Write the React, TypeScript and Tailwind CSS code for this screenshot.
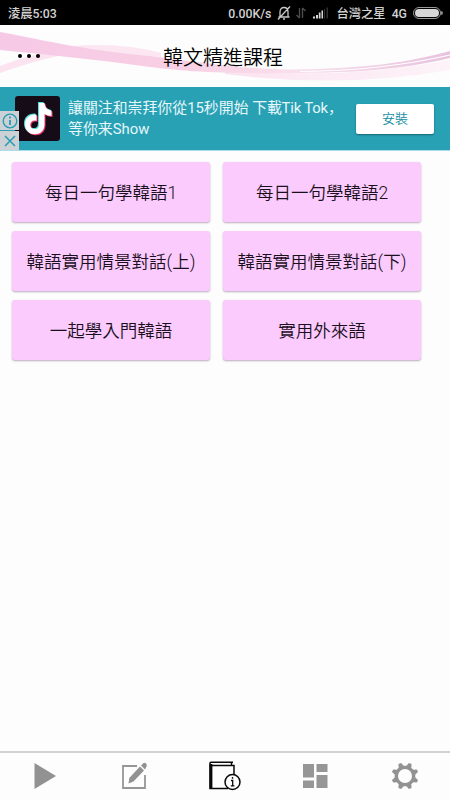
import type { ReactNode } from "react";

const courses = [
  "每日一句學韓語1",
  "每日一句學韓語2",
  "韓語實用情景對話(上)",
  "韓語實用情景對話(下)",
  "一起學入門韓語",
  "實用外來語",
];

const StatusBar = () => (
  <div className="flex h-[25px] shrink-0 items-center bg-black pl-2 pr-[7px] pt-px text-[12.300px] font-medium leading-[25px] text-[#d2d2d2]">
    <span className="whitespace-nowrap pt-[2px]">淩晨5:03</span>
    <span className="ml-auto whitespace-nowrap pt-[2px]">0.00K/s</span>
    <svg className="ml-[6px]" width="14" height="16" viewBox="0 0 14 16" fill="none" stroke="#c8c8c8" strokeWidth="1.300">
      <path d="M1.500 12h11M3 11.500V7c0-3 1.500-4.500 4-4.500S11 4 11 7v4.500M6 14h2M13 1.500 1 14.500" />
    </svg>
    <svg className="ml-[4px]" width="12" height="16" viewBox="0 0 12 16" fill="none" stroke="#4c4c4c" strokeWidth="1.400">
      <path d="M4.500 3v10M4.500 13l-3-3M7.500 13V3M7.500 3l3 3" />
    </svg>
    <svg className="ml-[6px]" width="16" height="14" viewBox="0 0 16 14">
      <path d="M0 12.500h2v-2H0zM3 12.500h2V9H3zM5.800 12.500h1.700V6.500H5.800zM8.500 12.500H10V4.500H8.500z" fill="#d8d8d8" />
      <path d="M11 12.500h1V3h-1zM13.500 12.500h1.500V1.500h-1.500z" fill="#303030" />
    </svg>
    <span className="ml-[7px] whitespace-nowrap pt-[2px]">台灣之星</span>
    <span className="ml-[6px] whitespace-nowrap pt-[2px]">4G</span>
    <span className="ml-[6px] flex h-[12px] w-[28px] items-center rounded-full border border-[#999] px-px">
      <span className="h-[8px] w-full rounded-full bg-[#d8d8d8]" />
    </span>
    <span className="h-1 w-[2px] rounded-r bg-[#888]" />
  </div>
);

const Header = () => (
  <header className="relative flex h-[62px] shrink-0 items-center justify-center overflow-hidden bg-[#fdfdfd]">
    <svg className="absolute inset-0" width="450" height="62" viewBox="0 0 450 62">
      <defs>
        <linearGradient id="ribbon" x1="0" x2="1">
          <stop offset="0" stopColor="#f6c9e6" />
          <stop offset="0.4" stopColor="#f8cfe4" />
          <stop offset="0.65" stopColor="#f9dfeb" />
          <stop offset="1" stopColor="#e8c3df" />
        </linearGradient>
        <linearGradient id="haze" x1="0" x2="1">
          <stop offset="0" stopColor="#fbe3f0" />
          <stop offset="1" stopColor="#fdf3f8" />
        </linearGradient>
      </defs>
      <path d="M0 41Q18 34 38 29L62 30Q30 37 0 48z" fill="#fbe3f0" />
      <path d="M72 21Q122 17 161 28V32Q125 29 95 27z" fill="#fce6f1" />
      <path d="M225 44Q340 56 450 35V45Q340 64 225 49z" fill="url(#haze)" />
      <path
        d="M0 7C35 13 80 25 150 31C200 37 230 43 290 44.500C350 44 400 40 450 26V33C400 45 350 48 290 48C220 49 180 46 150 42C100 35 50 30 0 25z"
        fill="url(#ribbon)"
      />
      <path d="M300 46.500Q380 46 450 30" fill="none" stroke="#fff" strokeWidth="1.200" />
    </svg>
    <button className="absolute left-[18px] top-[29px] flex gap-[5px]" aria-label="選單">
      <span className="size-1 rounded-full bg-black" />
      <span className="size-1 rounded-full bg-black" />
      <span className="size-1 rounded-full bg-black" />
    </button>
    <h1 className="relative -left-[2px] pt-[4px] text-[20px] font-[350] leading-[58px] text-black">韓文精進課程</h1>
  </header>
);

const notePath =
  "M24 7h5.500c.5 4.500 3 7 7 7.500v5.500c-2.800 0-5-.8-7-2v10.500c0 13-19.500 13-19.500 0 0-6.500 5-10.500 11.500-9.800v6c-8-1.800-8 9-1.500 8.300 3 0 4-2 4-5z";

const AdBanner = () => (
  <div className="relative flex h-[64px] shrink-0 border-b border-[#addbe9] bg-[#29a1b4] pl-[15px] pt-[9px]">
    <svg className="shrink-0" width="45" height="45" viewBox="0 0 45 45">
      <rect width="45" height="45" rx="3" fill="#160c18" />
      <path d={notePath} fill="#51ded9" transform="translate(-1 -1)" />
      <path d={notePath} fill="#ec396b" transform="translate(1 1)" />
      <path d={notePath} fill="#fff" />
    </svg>
    <p className="ml-[8px] whitespace-nowrap text-[14.900px] leading-[21px] text-[#e5f7fb]">
      讓關注和崇拜你從15秒開始 <span className="tracking-[-0.2px]">下載Tik Tok</span>
      <span className="font-['Noto_Sans_CJK_SC']">，</span>
      <br />
      等你来Show
    </p>
    <button className="absolute left-[356px] top-[17px] h-[30px] w-[78px] rounded-[2px] bg-white pb-px text-[13px] font-[350] text-[#168fa2] shadow-[0_1px_2px_#176676]">
      安裝
    </button>
    <div className="absolute left-0 top-[24px] flex flex-col gap-px">
      <span className="flex h-[19px] w-[19px] items-center justify-center bg-[#cbd1d4]">
        <svg width="16" height="16" viewBox="0 0 16 16" fill="none" stroke="#289bb2" strokeWidth="1.300">
          <circle cx="8" cy="8" r="6.800" />
          <path d="M8 7v5M8 3.500v2" strokeWidth="1.800" />
        </svg>
      </span>
      <span className="flex h-[19px] w-[19px] items-center justify-center bg-[#cbd1d4]">
        <svg width="12" height="12" viewBox="0 0 12 12" stroke="#289bb2" strokeWidth="1.500">
          <path d="m1 1 10 10M11 1 1 11" />
        </svg>
      </span>
    </div>
  </div>
);

const NavItem = ({ label, children }: { label: string; children: ReactNode }) => (
  <button aria-label={label} className="flex flex-1 items-center justify-center">
    {children}
  </button>
);

const BottomNav = () => (
  <nav className="flex h-[49px] shrink-0 border-t-2 border-[#d3d3d3] bg-[#fdfdfd] pb-px">
    <NavItem label="播放">
      <svg width="32" height="32" viewBox="0 0 32 32">
        <path d="M5.500 3 27 16 5.500 29z" fill="#929292" />
      </svg>
    </NavItem>
    <NavItem label="編輯">
      <svg width="32" height="32" viewBox="0 0 32 32">
        <path d="M18 6H4v22h22V15" fill="none" stroke="#969696" strokeWidth="1.800" />
        <path d="M10.300 18 21 6.500l4 4L14.500 21.500l-5 2zM22 5.500l2.300-2.300q1.200-1 2.700.3t.5 3L26 9.500z" fill="#929292" />
      </svg>
    </NavItem>
    <NavItem label="課程">
      <svg width="32" height="32" viewBox="0 0 32 32" fill="none" stroke="#080808" strokeWidth="1.500">
        <path d="M19 28.500H1V3q0-.8 1-.8h22M2 5.500h23V15M22.500 2.500v3" />
        <path d="M2 4v24.500" strokeWidth="2.800" />
        <circle cx="23.500" cy="22" r="7.500" fill="#fdfdfd" />
        <path d="M22 20.500h1.700v5.300m-1.900 0h3.600M23.500 17v1.800" strokeWidth="1.300" />
      </svg>
    </NavItem>
    <NavItem label="總覽">
      <svg width="32" height="32" viewBox="0 0 32 32" fill="#969696">
        <path d="M4 4h11v13.500H4zM17.500 4h11v8h-11zM4 20.500h11V28H4zM17.500 15h11v13h-11z" />
      </svg>
    </NavItem>
    <NavItem label="設定">
      <svg width="32" height="32" viewBox="-16 -16 32 32" fill="#929292" fillRule="evenodd">
        <path d="M10.300 1.400 13 3.900 11.900 6.600 8.300 6.300 6.300 8.300 6.600 11.900 3.900 13 1.400 10.300-1.400 10.300-3.900 13-6.600 11.900-6.300 8.300-8.300 6.300-11.900 6.600-13 3.900-10.300 1.400-10.300-1.400-13-3.900-11.900-6.600-8.300-6.300-6.300-8.300-6.600-11.900-3.900-13-1.400-10.300 1.400-10.300 3.900-13 6.600-11.900 6.300-8.300 8.300-6.300 11.900-6.600 13-3.900 10.300-1.400zM7 0A7 7 0 1 0-7 0 7 7 0 1 0 7 0z" />
      </svg>
    </NavItem>
  </nav>
);

export default function App() {
  return (
    <div className="flex h-screen w-full flex-col overflow-hidden bg-[#fdfdfd] font-[Roboto,'Noto_Sans_CJK_TC',sans-serif]">
      <StatusBar />
      <Header />
      <AdBanner />
      <main className="grid flex-1 auto-rows-[60px] grid-cols-[198px_198px] content-start gap-x-[13px] gap-y-[9px] pl-[12px] pt-[11px]">
        {courses.map((course) => (
          <button
            key={course}
            className="rounded-[3px] bg-[#facbfc] pt-[3px] text-[17.500px] font-[350] text-[#1a0f1c] shadow-[0_1px_2px_#bba9bd]"
          >
            {course}
          </button>
        ))}
      </main>
      <BottomNav />
    </div>
  );
}
